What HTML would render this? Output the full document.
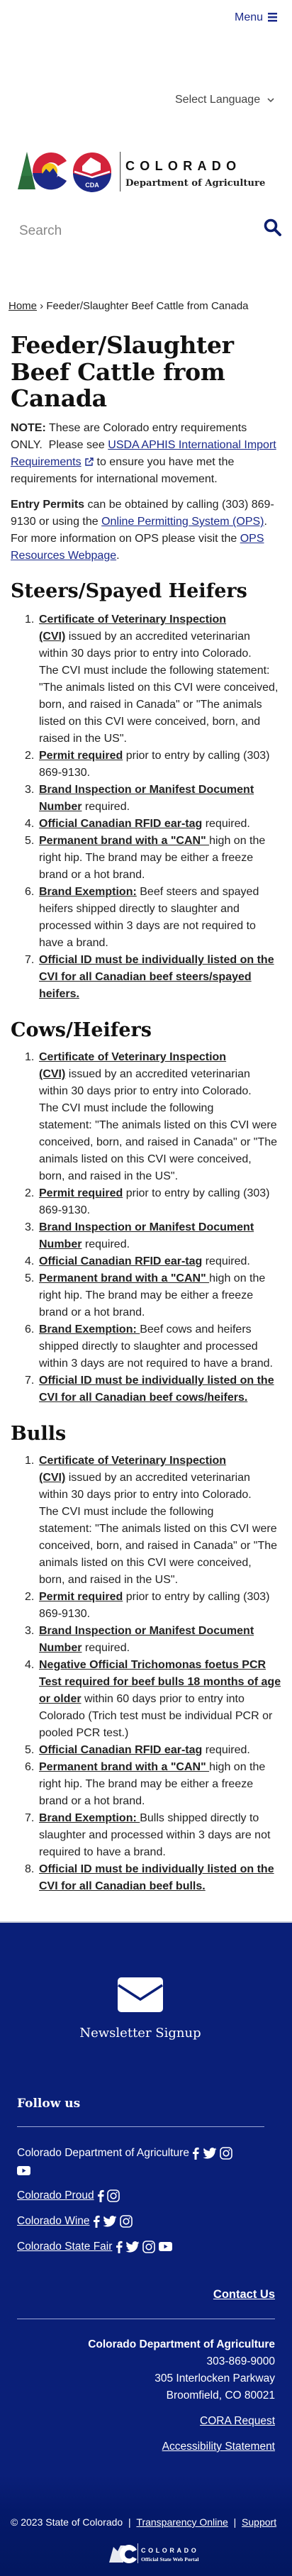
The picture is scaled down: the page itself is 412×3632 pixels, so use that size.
<!DOCTYPE html>
<html><head><meta charset="utf-8">
<style>
*{margin:0;padding:0;box-sizing:border-box}
body{width:412px;height:3632px;position:relative;background:#fff;font-family:"Liberation Sans",sans-serif;color:#222;font-size:16px;line-height:24px;overflow:hidden}
.a{position:absolute;white-space:nowrap}
a{color:inherit}
.lk{color:#1b2a8a;text-decoration:underline}
.slab{font-family:"DejaVu Serif","Liberation Serif",serif;font-weight:bold;color:#111}
ol{list-style:none}
li{position:relative}
li .n{position:absolute;left:-20px}
b u,u b{font-weight:bold}
.ft{color:#fff}
.ft a{color:#fff;text-decoration:underline}
svg{display:inline-block;vertical-align:middle}
</style></head><body>

<!-- header -->
<div class="a" style="left:331px;top:13px;color:#1b2a8a;font-size:16px">Menu</div>
<svg class="a" style="left:378px;top:18px" width="14" height="13" viewBox="0 0 14 13"><rect y="0" width="13" height="2.5" fill="#1b2a8a"/><rect y="5" width="13" height="2.5" fill="#1b2a8a"/><rect y="10" width="13" height="2.5" fill="#1b2a8a"/></svg>

<div class="a" style="left:247px;top:129px;color:#444;font-size:16px">Select Language</div>
<svg class="a" style="left:377px;top:138px" width="10" height="7" viewBox="0 0 10 7"><path d="M1 1l4 4 4-4" stroke="#555" stroke-width="1.6" fill="none"/></svg>

<!-- logo -->
<svg class="a" style="left:24px;top:210px" width="360" height="62" viewBox="0 0 360 62">
  <polygon points="14,4 26,57 1,57" fill="#2a6b3a"/>
  <polygon points="14,12 22,38 6,38" fill="#2f7a42"/>
  <path d="M48 5a26 26 0 1 0 22 40l-12-7a12 12 0 1 1 0-14l12-7A26 26 0 0 0 48 5z" fill="#d3233a"/>
  <path d="M22 34a26 26 0 0 0 48 11l-12-7a12 12 0 0 1-22-4z" fill="#1c2a88"/>
  <circle cx="46" cy="31" r="11" fill="#f5c318"/>
  <path d="M35 36l6-8 5 5 5-6 6 9a11 11 0 0 1-22 0z" fill="#1c2a88"/>
  <circle cx="106" cy="32" r="27" fill="#d3233a"/>
  <path d="M79 34q27 10 54 0a27 27 0 0 1-54 0z" fill="#1c2a88"/>
  <path d="M81 32l25 8 25-8" stroke="#fff" stroke-width="2.5" fill="none"/>
  <path d="M92 24l12-12 14 8v10l-14 5-12-4z" fill="#fff"/>
  <text x="106" y="54" font-family="Liberation Sans" font-weight="bold" font-size="9" fill="#fff" text-anchor="middle">CDA</text>
  <rect x="145" y="4" width="1.2" height="56" fill="#555"/>
  <text x="153" y="30" font-family="Liberation Sans" font-weight="bold" font-size="18" letter-spacing="7.3" fill="#111">COLORADO</text>
  <text x="153" y="52" font-family="DejaVu Serif" font-weight="bold" font-size="13.2" fill="#222">Department of Agriculture</text>
</svg>

<div class="a" style="left:27px;top:313px;color:#888;font-size:19px;line-height:26px">Search</div>
<svg class="a" style="left:372px;top:308px" width="26" height="26" viewBox="0 0 26 26"><circle cx="10" cy="10" r="7.5" stroke="#0d1f6e" stroke-width="3.6" fill="none"/><path d="M15.5 15.5l7.5 7.5" stroke="#0d1f6e" stroke-width="4" stroke-linecap="round"/></svg>

<!-- breadcrumb -->
<div class="a" style="left:12px;top:420px;font-size:15px;color:#222"><u>Home</u> &rsaquo; Feeder/Slaughter Beef Cattle from Canada</div>

<!-- title -->
<div class="a slab" style="left:15px;top:468px;font-size:33px;line-height:37.5px;letter-spacing:-0.3px">Feeder/Slaughter<br>Beef Cattle from<br>Canada</div>

<div class="a" style="left:15px;top:592px">
<b>NOTE:</b> These are Colorado entry requirements<br>
ONLY.&nbsp; Please see <span class="lk">USDA APHIS International Import</span><br>
<span class="lk">Requirements</span> <svg width="13" height="13" viewBox="0 0 13 13"><path d="M6 2H2v9h9V7M8 1h4v4M12 1L6 7" stroke="#1b2a8a" stroke-width="1.4" fill="none"/></svg> to ensure you have met the<br>
requirements for international movement.
</div>
<div class="a" style="left:15px;top:700px">
<b>Entry Permits</b> can be obtained by calling (303) 869-<br>
9130 or using the <span class="lk">Online Permitting System (OPS)</span>.<br>
For more information on OPS please visit the <span class="lk">OPS</span><br>
<span class="lk">Resources Webpage</span>.
</div>

<div class="a slab" style="left:15px;top:817px;font-size:27px;line-height:34px">Steers/Spayed Heifers</div>
<ol class="a" style="left:55px;top:862px">
<li><span class="n">1.</span><u><b>Certificate of Veterinary Inspection</b></u><br><u><b>(CVI)</b></u> issued by an accredited veterinarian<br>within 30 days prior to entry into Colorado.<br>The CVI must include the following statement:<br>"The animals listed on this CVI were conceived,<br>born, and raised in Canada" or "The animals<br>listed on this CVI were conceived, born, and<br>raised in the US".</li>
<li><span class="n">2.</span><u><b>Permit required</b></u> prior to entry by calling (303)<br>869-9130.</li>
<li><span class="n">3.</span><u><b>Brand Inspection or Manifest Document</b></u><br><u><b>Number</b></u> required.</li>
<li><span class="n">4.</span><u><b>Official Canadian RFID ear-tag</b></u> required.</li>
<li><span class="n">5.</span><u><b>Permanent brand with a "CAN" </b></u>high on the<br>right hip. The brand may be either a freeze<br>brand or a hot brand.</li>
<li><span class="n">6.</span><u><b>Brand Exemption:</b></u> Beef steers and spayed<br>heifers shipped directly to slaughter and<br>processed within 3 days are not required to<br>have a brand.</li>
<li><span class="n">7.</span><u><b>Official ID must be individually listed on the</b></u><br><u><b>CVI for all Canadian beef steers/spayed</b></u><br><u><b>heifers.</b></u></li>
</ol>

<div class="a slab" style="left:15px;top:1436px;font-size:27px;line-height:34px">Cows/Heifers</div>
<ol class="a" style="left:55px;top:1479px">
<li><span class="n">1.</span><u><b>Certificate of Veterinary Inspection</b></u><br><u><b>(CVI)</b></u> issued by an accredited veterinarian<br>within 30 days prior to entry into Colorado.<br>The CVI must include the following<br>statement: "The animals listed on this CVI were<br>conceived, born, and raised in Canada" or "The<br>animals listed on this CVI were conceived,<br>born, and raised in the US".</li>
<li><span class="n">2.</span><u><b>Permit required</b></u> prior to entry by calling (303)<br>869-9130.</li>
<li><span class="n">3.</span><u><b>Brand Inspection or Manifest Document</b></u><br><u><b>Number</b></u> required.</li>
<li><span class="n">4.</span><u><b>Official Canadian RFID ear-tag</b></u> required.</li>
<li><span class="n">5.</span><u><b>Permanent brand with a "CAN" </b></u>high on the<br>right hip. The brand may be either a freeze<br>brand or a hot brand.</li>
<li><span class="n">6.</span><u><b>Brand Exemption: </b></u>Beef cows and heifers<br>shipped directly to slaughter and processed<br>within 3 days are not required to have a brand.</li>
<li><span class="n">7.</span><u><b>Official ID must be individually listed on the</b></u><br><u><b>CVI for all Canadian beef cows/heifers.</b></u></li>
</ol>

<div class="a slab" style="left:15px;top:2005px;font-size:27px;line-height:34px">Bulls</div>
<ol class="a" style="left:55px;top:2048px">
<li><span class="n">1.</span><u><b>Certificate of Veterinary Inspection</b></u><br><u><b>(CVI)</b></u> issued by an accredited veterinarian<br>within 30 days prior to entry into Colorado.<br>The CVI must include the following<br>statement: "The animals listed on this CVI were<br>conceived, born, and raised in Canada" or "The<br>animals listed on this CVI were conceived,<br>born, and raised in the US".</li>
<li><span class="n">2.</span><u><b>Permit required</b></u> prior to entry by calling (303)<br>869-9130.</li>
<li><span class="n">3.</span><u><b>Brand Inspection or Manifest Document</b></u><br><u><b>Number</b></u> required.</li>
<li><span class="n">4.</span><u><b>Negative Official Trichomonas foetus PCR</b></u><br><u><b>Test required for beef bulls 18 months of age</b></u><br><u><b>or older</b></u> within 60 days prior to entry into<br>Colorado (Trich test must be individual PCR or<br>pooled PCR test.)</li>
<li><span class="n">5.</span><u><b>Official Canadian RFID ear-tag</b></u> required.</li>
<li><span class="n">6.</span><u><b>Permanent brand with a "CAN" </b></u>high on the<br>right hip. The brand may be either a freeze<br>brand or a hot brand.</li>
<li><span class="n">7.</span><u><b>Brand Exemption: </b></u>Bulls shipped directly to<br>slaughter and processed within 3 days are not<br>required to have a brand.</li>
<li><span class="n">8.</span><u><b>Official ID must be individually listed on the</b></u><br><u><b>CVI for all Canadian beef bulls.</b></u></li>
</ol>

<!-- footer -->
<div class="a ft" style="left:0;top:2709px;width:412px;height:923px;background:linear-gradient(#0a1f78 0,#0a1f78 780px,#04196a 830px,#03175f 923px);border-top:2px solid #c8cbd8"></div>
<svg class="a" style="left:166px;top:2788px" width="64" height="49" viewBox="0 0 64 49"><rect x="0" y="0" width="64" height="49" rx="5" fill="#fff"/><path d="M1 11l31 20 31-20" stroke="#0a1f78" stroke-width="3.5" fill="none"/></svg>
<div class="a ft" style="left:0;width:396px;text-align:center;top:2854px;font-family:'DejaVu Serif',serif;font-size:18px;line-height:26px">Newsletter Signup</div>
<div class="a ft" style="left:24px;top:2954px;font-family:'DejaVu Serif',serif;font-weight:bold;font-size:17px">Follow us</div>
<div class="a" style="left:24px;top:2998px;width:349px;height:1px;background:#9aa6d6"></div>

<div class="a ft" style="left:24px;top:3024px;font-size:15.5px">Colorado Department of Agriculture
<svg width="10" height="18" viewBox="0 0 10 18"><path d="M6.5 18V10h2.7l.4-3H6.5V5.2c0-.9.3-1.5 1.5-1.5h1.6V1C9.3 1 8.4.9 7.3.9 5 .9 3.5 2.3 3.5 4.8V7H1v3h2.5v8z" fill="#fff"/></svg>
<svg width="20" height="16" viewBox="0 0 24 20"><path d="M24 2.4a9.8 9.8 0 0 1-2.8.8A4.9 4.9 0 0 0 23.3.5a9.8 9.8 0 0 1-3.1 1.2A4.9 4.9 0 0 0 11.8 6 14 14 0 0 1 1.7.9a4.9 4.9 0 0 0 1.5 6.6A4.9 4.9 0 0 1 1 6.9 4.9 4.9 0 0 0 4.9 11.8a4.9 4.9 0 0 1-2.2.1 4.9 4.9 0 0 0 4.6 3.4A9.9 9.9 0 0 1 0 17.3 14 14 0 0 0 7.5 19.5c9 0 14-7.5 14-14v-.6A10 10 0 0 0 24 2.4z" fill="#fff"/></svg>
<svg width="18" height="18" viewBox="0 0 18 18"><rect x="1" y="1" width="16" height="16" rx="4.5" stroke="#fff" stroke-width="1.6" fill="none"/><circle cx="9" cy="9" r="3.8" stroke="#fff" stroke-width="1.6" fill="none"/><circle cx="13.6" cy="4.4" r="1" fill="#fff"/></svg></div>
<svg class="a" style="left:24px;top:3054px" width="19" height="13" viewBox="0 0 19 13"><rect width="19" height="13" rx="3" fill="#fff"/><path d="M7.5 3.5v6l5-3z" fill="#0a1f78"/></svg>

<div class="a ft" style="left:24px;top:3084px;font-size:15.5px"><a>Colorado Proud</a>
<svg width="10" height="18" viewBox="0 0 10 18"><path d="M6.5 18V10h2.7l.4-3H6.5V5.2c0-.9.3-1.5 1.5-1.5h1.6V1C9.3 1 8.4.9 7.3.9 5 .9 3.5 2.3 3.5 4.8V7H1v3h2.5v8z" fill="#fff"/></svg>
<svg width="18" height="18" viewBox="0 0 18 18"><rect x="1" y="1" width="16" height="16" rx="4.5" stroke="#fff" stroke-width="1.6" fill="none"/><circle cx="9" cy="9" r="3.8" stroke="#fff" stroke-width="1.6" fill="none"/><circle cx="13.6" cy="4.4" r="1" fill="#fff"/></svg></div>

<div class="a ft" style="left:24px;top:3120px;font-size:15.5px"><a>Colorado Wine</a>
<svg width="10" height="18" viewBox="0 0 10 18"><path d="M6.5 18V10h2.7l.4-3H6.5V5.2c0-.9.3-1.5 1.5-1.5h1.6V1C9.3 1 8.4.9 7.3.9 5 .9 3.5 2.3 3.5 4.8V7H1v3h2.5v8z" fill="#fff"/></svg>
<svg width="20" height="16" viewBox="0 0 24 20"><path d="M24 2.4a9.8 9.8 0 0 1-2.8.8A4.9 4.9 0 0 0 23.3.5a9.8 9.8 0 0 1-3.1 1.2A4.9 4.9 0 0 0 11.8 6 14 14 0 0 1 1.7.9a4.9 4.9 0 0 0 1.5 6.6A4.9 4.9 0 0 1 1 6.9 4.9 4.9 0 0 0 4.9 11.8a4.9 4.9 0 0 1-2.2.1 4.9 4.9 0 0 0 4.6 3.4A9.9 9.9 0 0 1 0 17.3 14 14 0 0 0 7.5 19.5c9 0 14-7.5 14-14v-.6A10 10 0 0 0 24 2.4z" fill="#fff"/></svg>
<svg width="18" height="18" viewBox="0 0 18 18"><rect x="1" y="1" width="16" height="16" rx="4.5" stroke="#fff" stroke-width="1.6" fill="none"/><circle cx="9" cy="9" r="3.8" stroke="#fff" stroke-width="1.6" fill="none"/><circle cx="13.6" cy="4.4" r="1" fill="#fff"/></svg></div>

<div class="a ft" style="left:24px;top:3156px;font-size:15.5px"><a>Colorado State Fair</a>
<svg width="10" height="18" viewBox="0 0 10 18"><path d="M6.5 18V10h2.7l.4-3H6.5V5.2c0-.9.3-1.5 1.5-1.5h1.6V1C9.3 1 8.4.9 7.3.9 5 .9 3.5 2.3 3.5 4.8V7H1v3h2.5v8z" fill="#fff"/></svg>
<svg width="20" height="16" viewBox="0 0 24 20"><path d="M24 2.4a9.8 9.8 0 0 1-2.8.8A4.9 4.9 0 0 0 23.3.5a9.8 9.8 0 0 1-3.1 1.2A4.9 4.9 0 0 0 11.8 6 14 14 0 0 1 1.7.9a4.9 4.9 0 0 0 1.5 6.6A4.9 4.9 0 0 1 1 6.9 4.9 4.9 0 0 0 4.9 11.8a4.9 4.9 0 0 1-2.2.1 4.9 4.9 0 0 0 4.6 3.4A9.9 9.9 0 0 1 0 17.3 14 14 0 0 0 7.5 19.5c9 0 14-7.5 14-14v-.6A10 10 0 0 0 24 2.4z" fill="#fff"/></svg>
<svg width="18" height="18" viewBox="0 0 18 18"><rect x="1" y="1" width="16" height="16" rx="4.5" stroke="#fff" stroke-width="1.6" fill="none"/><circle cx="9" cy="9" r="3.8" stroke="#fff" stroke-width="1.6" fill="none"/><circle cx="13.6" cy="4.4" r="1" fill="#fff"/></svg>
<svg width="19" height="13" viewBox="0 0 19 13"><rect width="19" height="13" rx="3" fill="#fff"/><path d="M7.5 3.5v6l5-3z" fill="#0a1f78"/></svg></div>

<div class="a ft" style="right:24px;top:3223px;font-size:16.5px;font-weight:bold"><a>Contact Us</a></div>
<div class="a" style="left:24px;top:3269px;width:364px;height:1px;background:#9aa6d6"></div>
<div class="a ft" style="right:24px;top:3294px;text-align:right;font-size:15.5px">
<b>Colorado Department of Agriculture</b><br>303-869-9000<br>305 Interlocken Parkway<br>Broomfield, CO 80021</div>
<div class="a ft" style="right:24px;top:3402px;font-size:15.5px"><a>CORA Request</a></div>
<div class="a ft" style="right:24px;top:3438px;font-size:15.5px"><a>Accessibility Statement</a></div>

<div class="a ft" style="left:15px;top:3544px;font-size:14px">© 2023 State of Colorado &nbsp;| &nbsp;<a>Transparency Online</a> &nbsp;| &nbsp;<a>Support</a></div>

<svg class="a" style="left:152px;top:3583px" width="140" height="34" viewBox="0 0 140 34">
  <path d="M2 30l6-22 6 6 4-8h6l-2 24z" fill="#fff" opacity=".9"/>
  <path d="M30 5a13 13 0 1 0 11 20l-6-3a6 6 0 1 1 0-7l6-3A13 13 0 0 0 30 5z" fill="#fff"/>
  <rect x="42" y="3" width=".8" height="28" fill="#fff"/>
  <text x="47" y="16" font-family="Liberation Sans" font-weight="bold" font-size="9" letter-spacing="3.6" fill="#fff">COLORADO</text>
  <text x="47" y="28" font-family="Liberation Serif" font-weight="bold" font-size="7.6" fill="#fff">Official State Web Portal</text>
</svg>
</body></html>
